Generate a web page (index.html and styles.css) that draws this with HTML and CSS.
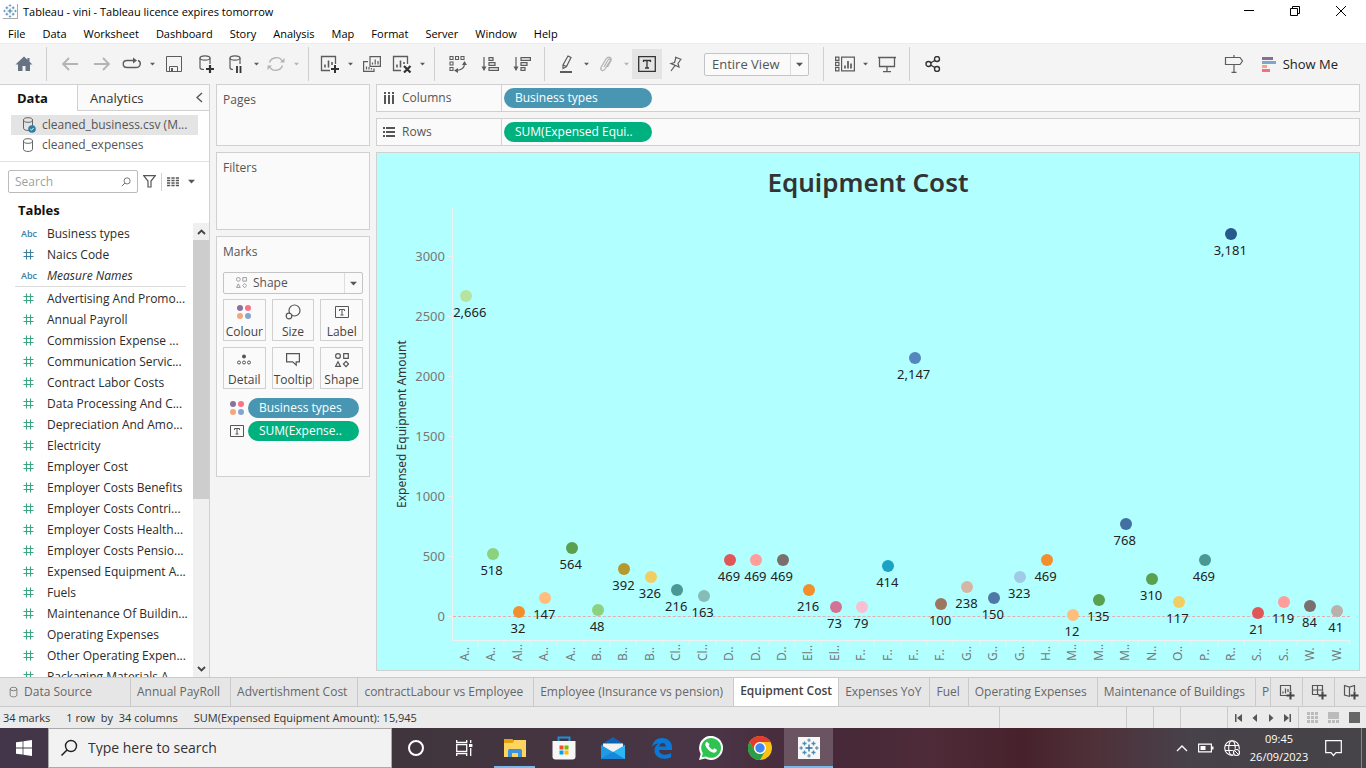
FILE: index.html
```html
<!DOCTYPE html>
<html lang="en-GB">
<head>
<meta charset="utf-8">
<title>Tableau - vini</title>
<link rel="stylesheet" href="styles.css">
</head>
<body>
<svg class="sprite" aria-hidden="true">
  <symbol id="tableau" viewBox="0 0 20 20"><g fill="none" stroke-width="1.3"><path stroke="#2a6f9e" d="M10 6.5v7M6.5 10h7"/><path stroke="#4c8bb5" d="M5.5 3.5v4M3.5 5.5h4M14.5 3.5v4M12.5 5.5h4M5.5 12.5v4M3.5 14.5h4M14.5 12.5v4M12.5 14.5h4"/><path stroke="#5f97bb" d="M10 .5v3.400M8.300 2.200h3.400M10 16.100v3.400M8.300 17.800h3.400M2.200 8.300v3.400M.5 10h3.400M17.800 8.300v3.400M16.100 10h3.400"/></g></symbol>
  <symbol id="caret" viewBox="0 0 8 5"><path fill="currentColor" d="M0 .5h8L4 4.800z"/></symbol>
  <symbol id="cyl" viewBox="0 0 12 14"><g fill="none" stroke="#666"><ellipse cx="6" cy="3" rx="4.500" ry="2.300"/><path d="M1.500 3v8.200c0 3 9 3 9 0V3"/></g></symbol>
  <symbol id="four" viewBox="0 0 14 14"><circle cx="3" cy="3" r="3" fill="#8a739b"/><circle cx="11" cy="3" r="3" fill="#fb7185"/><circle cx="3" cy="11" r="3" fill="#f3a77c"/><circle cx="11" cy="11" r="3" fill="#84a5cf"/></symbol>
  <symbol id="shapes" viewBox="0 0 14 14"><g fill="none" stroke="currentColor" stroke-width="1.200"><circle cx="3" cy="3" r="2.400"/><path d="M8.700.7h4.600v4.600H8.700zM3 8.800l2.400 4.500H.6zM11 8.300l2.600 2.700-2.600 2.700L8.400 11z"/></g></symbol>
  <symbol id="tbox" viewBox="0 0 14 14"><path fill="none" stroke="currentColor" d="M.5 1.500h13v11H.5z"/><path fill="none" stroke="currentColor" d="M4.500 6V4.500h5V6M7 4.500v5.500M5.500 10h3"/></symbol>
  <symbol id="hash" viewBox="0 0 11 11"><path fill="none" stroke="currentColor" stroke-width="1.100" d="M3.500.5v10M7.500.5v10M.5 3.500h10M.5 7.500h10"/></symbol>
  <symbol id="mag" viewBox="0 0 18 18"><circle cx="11" cy="7" r="5.500" fill="none" stroke="currentColor" stroke-width="1.400"/><path d="M7 11l-5.500 5.500" stroke="currentColor" stroke-width="1.600"/></symbol>
</svg>

<div class="app">
  <header class="titlebar">
    <svg class="logo" width="15" height="15"><use href="#tableau"/></svg>
    <h1>Tableau - vini - Tableau licence expires tomorrow</h1>
    <div class="winbtns">
      <button aria-label="Minimise"><svg width="12" height="12"><path d="M1 5.500h10" stroke="#000"/></svg></button>
      <button aria-label="Restore"><svg width="12" height="12"><path d="M1.500 3.500h7v7h-7zM3.500 3.500v-2h7v7h-2" fill="none" stroke="#000"/></svg></button>
      <button aria-label="Close"><svg width="12" height="12"><path d="M1 1l10 10M11 1L1 11" stroke="#000"/></svg></button>
    </div>
  </header>

  <nav class="menubar" aria-label="Main menu">
    <button>File</button><button>Data</button><button>Worksheet</button><button>Dashboard</button><button>Story</button><button>Analysis</button><button>Map</button><button>Format</button><button>Server</button><button>Window</button><button>Help</button>
  </nav>

  <div class="toolbar">
    <button class="tb" aria-label="Home"><svg width="18" height="16"><path fill="#667383" d="M9 .5L.5 8.500H3V15h4.500v-5h3v5H15V8.500h2.500L14.500 5.700V2h-2v1.800z"/></svg></button>
    <span class="sep"></span>
    <button class="tb dim" aria-label="Undo"><svg width="18" height="14"><path fill="none" stroke="currentColor" stroke-width="1.800" d="M8 1L2 7l6 6M2 7h15"/></svg></button>
    <button class="tb dim" aria-label="Redo"><svg width="18" height="14"><path fill="none" stroke="currentColor" stroke-width="1.800" d="M10 1l6 6-6 6M16 7H1"/></svg></button>
    <button class="tb split" aria-label="Replay"><svg width="20" height="14"><path fill="none" stroke="currentColor" stroke-width="1.400" d="M11 3.500H5c-5 0-5 7 0 7h9c5 0 5.500-6 2-7"/><path fill="currentColor" d="M11 .5l4 3-4 3z"/></svg></button>
    <button class="tb drop" aria-label="Replay options"><svg width="5" height="4"><use href="#caret"/></svg></button>
    <button class="tb" aria-label="Save"><svg width="16" height="16"><path fill="none" stroke="currentColor" d="M.5.5h15v15H.5zM3.500 15v-4.500h8V15"/><path fill="currentColor" d="M5 12h2v3H5z"/></svg></button>
    <button class="tb" aria-label="New data source"><svg width="16" height="18"><g fill="none" stroke="currentColor" stroke-width="1.200"><ellipse cx="7" cy="3" rx="5" ry="2.200"/><path d="M2 3v9.500c0 1.800 2 2 4 2M12 3v6"/></g><path stroke="#333" stroke-width="2.200" d="M12 10v8M8 14h8"/></svg></button>
    <button class="tb split" aria-label="Pause updates"><svg width="16" height="18"><g fill="none" stroke="currentColor" stroke-width="1.200"><ellipse cx="7" cy="3" rx="5" ry="2.200"/><path d="M2 3v9.500c0 1.800 1 2 3 2M12 3v6"/></g><path stroke="#333" stroke-width="1.800" d="M9 11v7M12.500 11v7"/></svg></button>
    <button class="tb drop" aria-label="Pause options"><svg width="5" height="4"><use href="#caret"/></svg></button>
    <button class="tb split dim" aria-label="Refresh"><svg width="18" height="16"><g fill="none" stroke="currentColor" stroke-width="1.400"><path d="M2.500 6.500c2-6 10.500-6.500 13-1M15.500 9.500c-2 6-10.500 6.500-13 1"/></g><path fill="currentColor" d="M13 6.500h4.500V2zM5 9.500H.5V14z"/></svg></button>
    <button class="tb drop dim" aria-label="Refresh options"><svg width="5" height="4"><use href="#caret"/></svg></button>
    <span class="sep"></span>
    <button class="tb split" aria-label="New worksheet"><svg width="20" height="18"><path fill="none" stroke="currentColor" stroke-width="1.300" d="M10 15.500H1.500v-14h14V9"/><path stroke="currentColor" stroke-width="1.600" d="M5 12.500v-3M8.500 12.500v-7M12 10V7"/><path stroke="#333" stroke-width="2" d="M15 10v8M11 14h8"/></svg></button>
    <button class="tb drop" aria-label="New worksheet options"><svg width="5" height="4"><use href="#caret"/></svg></button>
    <button class="tb" aria-label="Duplicate"><svg width="18" height="16"><path fill="none" stroke="currentColor" stroke-width="1.200" d="M7 .6h10.400v9.800H7zM5 5.600H.6v9.800h10.400V12.500"/><path stroke="currentColor" stroke-width="1.200" d="M9.500 8.500v-2M12.200 8.500v-5M15 8.500V5M3.500 13.500v-3M6 13.500V11M8.500 13.500V12"/></svg></button>
    <button class="tb split" aria-label="Clear sheet"><svg width="20" height="18"><path fill="none" stroke="currentColor" stroke-width="1.300" d="M9 15.500H1.500v-14h14V9"/><path stroke="currentColor" stroke-width="1.600" d="M5 12.500v-3M8.500 12.500v-7M12 9V7"/><path stroke="#333" stroke-width="2.200" d="M12 11l6.500 6.500M18.500 11L12 17.500"/></svg></button>
    <button class="tb drop" aria-label="Clear options"><svg width="5" height="4"><use href="#caret"/></svg></button>
    <span class="sep"></span>
    <button class="tb" aria-label="Swap rows and columns"><svg width="18" height="18"><g fill="none" stroke="currentColor" stroke-width="1.100"><path d="M1 1.500h3v3H1zM6.500 1.500h3v3h-3zM12 1.500h3v3h-3zM1 7h3v3H1zM1 12.500h3v3H1zM15.500 9c0 4-3 6-8 6.500"/></g><path fill="currentColor" d="M13 10l2.500-4L18 10zM9 13v5l-4-2.500z"/></svg></button>
    <button class="tb" aria-label="Sort ascending"><svg width="18" height="16"><path fill="none" stroke="currentColor" stroke-width="1.200" d="M3 1v13M8 1.600h4v2.800H8zM8 6.600h6v2.800H8zM8 11.600h9.400v2.800H8z"/><path fill="currentColor" d="M.5 10.500h5L3 15z"/></svg></button>
    <button class="tb" aria-label="Sort descending"><svg width="18" height="16"><path fill="none" stroke="currentColor" stroke-width="1.200" d="M3 1v13M8 1.600h9.400v2.800H8zM8 6.600h6v2.800H8zM8 11.600h4v2.800H8z"/><path fill="currentColor" d="M.5 10.500h5L3 15z"/></svg></button>
    <span class="sep"></span>
    <button class="tb split" aria-label="Highlight"><svg width="14" height="18"><path fill="none" stroke="currentColor" stroke-width="1.200" d="M9 1l3 1.500-4.500 9-3.500 2V10zM4 10l3.500 1.500"/><path stroke="currentColor" stroke-width="2" d="M1 17h12"/></svg></button>
    <button class="tb drop" aria-label="Highlight options"><svg width="5" height="4"><use href="#caret"/></svg></button>
    <button class="tb split dim" aria-label="Group"><svg width="14" height="16"><path fill="none" stroke="currentColor" stroke-width="1.300" d="M5 11l4-7c1-2 3-1 2 1l-5 8c-2 3-5 1-4-1.500L7 3c2-3 6-2 5 1.500L8.500 11"/></svg></button>
    <button class="tb drop dim" aria-label="Group options"><svg width="5" height="4"><use href="#caret"/></svg></button>
    <button class="tb pressed" aria-label="Show mark labels" aria-pressed="true"><svg width="18" height="16"><path fill="none" stroke="#333" stroke-width="1.300" d="M.7.7h16.600v14.600H.7zM5.500 6V4.500h7V6M9 4.500v7.500M7 12h4"/></svg></button>
    <button class="tb split" aria-label="Fix axes"><svg width="14" height="16"><path fill="none" stroke="currentColor" stroke-width="1.200" d="M6 1l6.500 2.500M7 1.500L5.500 6.500 2 7.500l8 3.500-1-3.500 3-4.500M6 9.500L2 15"/></svg></button>
    <div class="combo fit">
      <select aria-label="Fit"><option>Entire View</option></select>
      <span class="combo-arrow"><svg width="7" height="5"><use href="#caret"/></svg></span>
    </div>
    <span class="sep"></span>
    <button class="tb split" aria-label="Show cards"><svg width="20" height="16"><path fill="none" stroke="currentColor" stroke-width="1.200" d="M.6 1.100h3.300v3.300H.6zM.6 6.300h3.300v3.300H.6zM.6 11.500h3.300v3.300H.6zM6.600 1.100h12.800v13.700H6.600z"/><path stroke="currentColor" stroke-width="1.700" d="M10 12.500v-3M13 12.500V5M16 12.500v-5"/></svg></button>
    <button class="tb drop" aria-label="Card options"><svg width="5" height="4"><use href="#caret"/></svg></button>
    <button class="tb" aria-label="Presentation mode"><svg width="18" height="17"><path fill="none" stroke="currentColor" stroke-width="1.300" d="M0 1.500h18M1.500 2v8.500h15V2M9 10.500v5M5 15.700h8"/></svg></button>
    <span class="sep"></span>
    <button class="tb" aria-label="Share"><svg width="16" height="16"><g fill="none" stroke="#333" stroke-width="1.400"><circle cx="3.500" cy="8" r="2.500"/><circle cx="12" cy="3" r="2.500"/><circle cx="12" cy="13" r="2.500"/><path d="M5.500 7l4.300-2.500M5.500 9l4.300 2.500"/></g></svg></button>
    <span class="push"></span>
    <button class="tb" aria-label="Guide"><svg width="20" height="18"><path fill="none" stroke="currentColor" stroke-width="1.200" d="M10 0v2M1.500 2.500h14.500l2.500 3.500-2.500 3.500H1.500zM10 9.500v8M7.500 17.300h5"/></svg></button>
    <button class="showme"><svg width="15" height="15"><path fill="#866f96" d="M0 0h11v3H0z"/><path fill="#82a5ce" d="M0 4h14v3H0z"/><path fill="#f3a581" d="M0 8h5v3H0z"/><path fill="#fb6c81" d="M0 12h8v3H0z"/></svg>Show Me</button>
  </div>

  <main class="work">
    <aside class="side">
      <div class="side-tabs" role="tablist">
        <button class="stab on" role="tab" aria-selected="true">Data</button>
        <button class="stab off" role="tab" aria-selected="false">Analytics</button>
        <button class="fold" aria-label="Collapse pane"><svg width="7" height="11"><path d="M6 1L1 5.500 6 10" fill="none" stroke="#555" stroke-width="1.400"/></svg></button>
      </div>
      <ul class="sources">
        <li class="sel"><svg width="14" height="16"><use href="#cyl" width="12" height="14"/><circle cx="10" cy="12" r="3.800" fill="#2e7d9e"/><path d="M8.300 12l1.200 1.200 2.200-2.300" fill="none" stroke="#fff"/></svg><span>cleaned_business.csv (M...</span></li>
        <li><svg width="14" height="14"><use href="#cyl" width="12" height="14"/></svg><span>cleaned_expenses</span></li>
      </ul>
      <div class="find">
        <label class="findbox"><input type="text" placeholder="Search" aria-label="Search fields"><svg width="10" height="10"><use href="#mag"/></svg></label>
        <button aria-label="Filter fields"><svg width="13" height="13"><path d="M.7.7h11.600L8 6v6H5V6z" fill="none" stroke="#555" stroke-width="1.200"/></svg></button>
        <span class="bar"></span>
        <button aria-label="View as list"><svg width="12" height="10"><path d="M0 1h12M0 3.500h12M0 6h12M0 8.500h12" stroke="#555" stroke-width="1.300" stroke-dasharray="3.200 1.200"/></svg></button>
        <button aria-label="List options"><svg width="7" height="5"><use href="#caret"/></svg></button>
      </div>
      <h2>Tables</h2>
      <div class="fields">
        <div class="field-scroll">
          <ul class="dims">
            <li><b>Abc</b><span>Business types</span></li>
            <li><svg><use href="#hash"/></svg><span>Naics Code</span></li>
            <li><b>Abc</b><em>Measure Names</em></li>
          </ul>
          <ul class="meas">
            <li><svg><use href="#hash"/></svg><span>Advertising And Promo...</span></li>
            <li><svg><use href="#hash"/></svg><span>Annual Payroll</span></li>
            <li><svg><use href="#hash"/></svg><span>Commission Expense ...</span></li>
            <li><svg><use href="#hash"/></svg><span>Communication Servic...</span></li>
            <li><svg><use href="#hash"/></svg><span>Contract Labor Costs</span></li>
            <li><svg><use href="#hash"/></svg><span>Data Processing And C...</span></li>
            <li><svg><use href="#hash"/></svg><span>Depreciation And Amo...</span></li>
            <li><svg><use href="#hash"/></svg><span>Electricity</span></li>
            <li><svg><use href="#hash"/></svg><span>Employer Cost</span></li>
            <li><svg><use href="#hash"/></svg><span>Employer Costs Benefits</span></li>
            <li><svg><use href="#hash"/></svg><span>Employer Costs Contri...</span></li>
            <li><svg><use href="#hash"/></svg><span>Employer Costs Health...</span></li>
            <li><svg><use href="#hash"/></svg><span>Employer Costs Pensio...</span></li>
            <li><svg><use href="#hash"/></svg><span>Expensed Equipment A...</span></li>
            <li><svg><use href="#hash"/></svg><span>Fuels</span></li>
            <li><svg><use href="#hash"/></svg><span>Maintenance Of Buildin...</span></li>
            <li><svg><use href="#hash"/></svg><span>Operating Expenses</span></li>
            <li><svg><use href="#hash"/></svg><span>Other Operating Expen...</span></li>
            <li><svg><use href="#hash"/></svg><span>Packaging Materials A...</span></li>
          </ul>
        </div>
        <div class="scrollbar">
          <button aria-label="Scroll up"><svg width="9" height="6"><path d="M1 5l3.500-3.500L8 5" fill="none" stroke="#444" stroke-width="1.800"/></svg></button>
          <span class="thumb"></span>
          <button aria-label="Scroll down"><svg width="9" height="6"><path d="M1 1l3.500 3.500L8 1" fill="none" stroke="#444" stroke-width="1.800"/></svg></button>
        </div>
      </div>
    </aside>

    <section class="cards">
      <div class="card pages"><h3>Pages</h3></div>
      <div class="card filters"><h3>Filters</h3></div>
      <div class="card marks">
        <h3>Marks</h3>
        <div class="combo mark-type">
          <svg class="combo-icon" width="11" height="11"><use href="#shapes"/></svg>
          <select aria-label="Mark type"><option>Shape</option></select>
          <span class="combo-arrow"><svg width="7" height="5"><use href="#caret"/></svg></span>
        </div>
        <div class="encodings">
          <button><svg width="14" height="14"><use href="#four"/></svg>Colour</button>
          <button><svg width="16" height="16"><g fill="#fafafa" stroke="#555" stroke-width="1.200"><circle cx="9.500" cy="6.500" r="5.500"/><circle cx="4" cy="12" r="2.800"/></g></svg>Size</button>
          <button><svg width="14" height="14"><use href="#tbox"/></svg>Label</button>
          <button><svg width="14" height="14"><circle cx="7" cy="4.500" r="2" fill="#555"/><g fill="none" stroke="#555"><circle cx="2" cy="10.500" r="1.500"/><circle cx="7" cy="10.500" r="1.500"/><circle cx="12" cy="10.500" r="1.500"/></g></svg>Detail</button>
          <button><svg width="14" height="14"><path d="M.6 1.600h12.800v8.300h-3.200v3.300L6.700 9.900H.6z" fill="none" stroke="#555" stroke-width="1.200"/></svg>Tooltip</button>
          <button><svg width="14" height="14"><use href="#shapes"/></svg>Shape</button>
        </div>
        <div class="enc-row"><svg width="14" height="14"><use href="#four"/></svg><button class="pill blue">Business types</button></div>
        <div class="enc-row"><svg width="14" height="14"><use href="#tbox"/></svg><button class="pill green">SUM(Expense..</button></div>
      </div>
    </section>

    <section class="canvas">
      <div class="shelf">
        <div class="shelf-name"><svg width="12" height="12"><path d="M2 0v2M6 0v2M10 0v2M2 3v9M6 3v9M10 3v9" stroke="#555" stroke-width="2"/></svg>Columns</div>
        <button class="pill blue">Business types</button>
      </div>
      <div class="shelf">
        <div class="shelf-name"><svg width="12" height="12"><path d="M0 2h2M0 6h2M0 10h2M3 2h9M3 6h9M3 10h9" stroke="#555" stroke-width="2"/></svg>Rows</div>
        <button class="pill green">SUM(Expensed Equi..</button>
      </div>
      <div class="viz">
        <h2>Equipment Cost</h2>
        <div class="chart">
          <div class="y-title">Expensed Equipment Amount</div>
          <div class="y-axis" id="yAxis"></div>
          <div class="plot" id="plot"></div>
          <div class="x-axis" id="xAxis"></div>
        </div>
      </div>
    </section>
  </main>

  <nav class="sheets" aria-label="Sheets">
    <div class="sheet-list">
      <button class="sheet source"><svg width="9" height="12"><use href="#cyl"/></svg>Data Source</button>
      <button class="sheet">Annual PayRoll</button>
      <button class="sheet">Advertishment Cost</button>
      <button class="sheet">contractLabour vs Employee</button>
      <button class="sheet">Employee (Insurance vs pension)</button>
      <button class="sheet current" aria-current="page">Equipment Cost</button>
      <button class="sheet short">Expenses YoY</button>
      <button class="sheet short">Fuel</button>
      <button class="sheet">Operating Expenses</button>
      <button class="sheet">Maintenance of Buildings</button>
      <button class="sheet last">P</button>
    </div>
    <button class="add" aria-label="New worksheet"><svg width="16" height="16"><path fill="none" stroke="#555" stroke-width="1.200" d="M8 11.500H1.500v-10h10V7"/><path stroke="#555" stroke-width="1.200" d="M4 9.500v-2M6.500 9.500v-5M9 8V5"/><path stroke="#444" stroke-width="2" d="M11.500 7.500v8M7.500 11.500h8"/></svg></button>
    <button class="add" aria-label="New dashboard"><svg width="16" height="16"><path fill="none" stroke="#555" stroke-width="1.200" d="M8 10.500H1.500v-9h10V7M6.500 1.500v9M1.500 6h10"/><path stroke="#444" stroke-width="2" d="M11.500 7.500v8M7.500 11.500h8"/></svg></button>
    <button class="add" aria-label="New story"><svg width="16" height="16"><path fill="none" stroke="#555" stroke-width="1.200" d="M7 12.500l-5.500-1.500V1.500L6.500 3l5-1.500V7M6.500 3v9"/><path stroke="#444" stroke-width="2" d="M11.500 7.500v8M7.500 11.500h8"/></svg></button>
  </nav>

  <footer class="status">
    <span>34 marks</span><span>1 row &nbsp;by&nbsp; 34 columns</span><span>SUM(Expensed Equipment Amount): 15,945</span>
    <i class="cell wide"></i><i class="cell slim"></i><i class="cell slim"></i><i class="cell mid"></i>
    <div class="cell pager">
      <button aria-label="First"><svg width="8" height="8"><path fill="#555" d="M0 0h1.500v8H0zM7 0v8L2 4z"/></svg></button>
      <button aria-label="Previous"><svg width="8" height="8"><path fill="#555" d="M6 0v8L1.500 4z"/></svg></button>
      <button aria-label="Next"><svg width="8" height="8"><path fill="#555" d="M2 0v8l4.500-4z"/></svg></button>
      <button aria-label="Last"><svg width="8" height="8"><path fill="#555" d="M6.500 0H8v8H6.500zM1 0v8l5-4z"/></svg></button>
    </div>
    <div class="cell pager views">
      <button aria-label="Show sheet sorter"><svg width="11" height="11"><path stroke="#bbb" stroke-width="3" stroke-dasharray="3 1" d="M0 1.500h11M0 5.500h11M0 9.500h11"/></svg></button>
      <button aria-label="Show filmstrip"><svg width="11" height="11"><path fill="#bbb" d="M0 0h11v7H0z"/><path stroke="#bbb" stroke-width="3" stroke-dasharray="3 1" d="M0 9.500h11"/></svg></button>
      <button aria-label="Show tabs"><svg width="11" height="11"><path fill="#666" d="M0 0h11v11H0z"/></svg></button>
    </div>
  </footer>

  <div class="taskbar">
    <button class="start" aria-label="Start"><svg width="16" height="16"><path fill="#fff" d="M0 2.300L6.600 1.400v6.200H0zM7.400 1.300L16 0v7.600H7.400zM0 8.400h6.600v6.200L0 13.700zM7.400 8.400H16V16l-8.600-1.200z"/></svg></button>
    <label class="tasksearch"><svg width="18" height="18"><use href="#mag"/></svg><input type="text" placeholder="Type here to search" aria-label="Type here to search"></label>
    <button class="sys" aria-label="Cortana"><svg width="18" height="18"><circle cx="9" cy="9" r="7" fill="none" stroke="#fff" stroke-width="2"/></svg></button>
    <button class="sys" aria-label="Task view"><svg width="17" height="16"><path fill="none" stroke="#fff" stroke-width="1.300" d="M.7 0v2.500h10V0M.7 4.700h10v6.600H.7zM.7 16v-2.500h10V16M14.700 0v3M14.700 8v8"/><path fill="#fff" d="M13 4h3.400v3H13z"/></svg></button>
    <button class="taskapp open" aria-label="File Explorer"><svg width="22" height="18"><path fill="#fcd462" d="M0 2.500h8L10 1h12v17H0z"/><path fill="#e5a50a" d="M0 0h8.500L10 2 8.500 4H0z"/><path fill="#3b93dc" d="M4 18v-6c0-1 .5-2 1.500-2h11c1 0 1.500 1 1.500 2v6h-4v-4H8v4z"/></svg></button>
    <button class="taskapp" aria-label="Microsoft Store"><svg width="24" height="24"><path fill="none" stroke="#1e90d8" stroke-width="2" d="M6.500 6V1.500h11V6"/><path fill="#f6f6f6" d="M.5 5h23v15.500c0 2-1 3-3 3h-17c-2 0-3-1-3-3z"/><path fill="#f25022" d="M7.500 9.500h4v4h-4z"/><path fill="#7fba00" d="M12.500 9.500h4v4h-4z"/><path fill="#00a4ef" d="M7.500 14.500h4v4h-4z"/><path fill="#ffb900" d="M12.500 14.500h4v4h-4z"/></svg></button>
    <button class="taskapp" aria-label="Mail"><svg width="24" height="22"><path fill="#1063b0" d="M0 8L12 0l12 8v4H0z"/><path fill="#f2f2f2" d="M2 6.500h20V12l-10 5L2 12z"/><path fill="#1d9be6" d="M0 8l12 7-12 7z"/><path fill="#2bb7f5" d="M24 8L0 22h24z"/><path fill="#1687d9" d="M0 22l12-7.200L24 22z"/></svg></button>
    <button class="taskapp" aria-label="Edge"><svg width="22" height="22"><path fill="#0a78d6" d="M1 10C2 4 6 1 11 1c6 0 10 4 10 9v3H8c0 5 7 6 12 3v4.200C12 24 3.500 20.500 3.500 13.500 3.500 10 5.500 7.500 8 6.500 4.500 6.500 2.500 8 1 10zm7.200-.5h6.600C14.800 4.500 8.700 5 8.200 9.500z"/></svg></button>
    <button class="taskapp" aria-label="WhatsApp"><svg width="24" height="24"><path fill="#fff" d="M0 24l1.700-6A12 12 0 1 1 6.200 22.400z"/><path fill="#2fc351" d="M2.800 21.200l1-3.900A9.900 9.900 0 1 1 7 20.400z"/><path fill="#fff" d="M8.700 6.500c-.4-.8-1-.8-1.500-.3-1.300 1.300-1.200 3 .1 5 2 3 4.200 4.900 7.300 5.500 1.600.2 3.400-.9 3.300-2.900-.8-.7-1.700-1.100-2.600-1.500l-1.300 1.500c-2-.8-3.400-2-4.400-4 .6-.7 1.100-1.200.7-2z"/></svg></button>
    <button class="taskapp" aria-label="Chrome"><svg width="24" height="24"><circle cx="12" cy="12" r="12" fill="#fbc116"/><path fill="#e33b2e" d="M1.600 6A12 12 0 0 1 22.400 6H12a6 6 0 0 0-5.200 9z"/><path fill="#2a9d4a" d="M1.600 6A12 12 0 0 0 12 24l5.200-9a6 6 0 0 1-10.400 0z"/><circle cx="12" cy="12" r="6" fill="#fff"/><circle cx="12" cy="12" r="4.700" fill="#4285f4"/></svg></button>
    <button class="taskapp open active" aria-label="Tableau"><svg width="22" height="22"><path fill="#f7f7f7" d="M0 0h22v22H0z"/><use href="#tableau" x="1" y="1" width="20" height="20"/></svg></button>
    <span class="push"></span>
    <div class="tray">
      <svg width="12" height="8"><path d="M1 7l5-5 5 5" fill="none" stroke="#fff" stroke-width="1.400"/></svg>
      <svg width="16" height="10"><path d="M.6 1.100h12.800v7.800H.6z" fill="none" stroke="#fff" stroke-width="1.200"/><path fill="#fff" d="M2.500 3h5v4h-5zM14 3.500h1.500v3H14z"/></svg>
      <svg width="17" height="17"><g fill="none" stroke="#fff" stroke-width="1.100"><circle cx="8" cy="8" r="7.300"/><ellipse cx="8" cy="8" rx="3.300" ry="7.300"/><path d="M1 5.500h14M1 10.500h9"/></g><circle cx="12.500" cy="12.500" r="4" fill="#47414a"/><circle cx="12.500" cy="12.500" r="3" fill="none" stroke="#fff" stroke-width="1.200"/><path d="M10.500 10.500l4 4" stroke="#fff"/></svg>
    </div>
    <div class="clock"><time>09:45</time><time>26/09/2023</time></div>
    <button class="notif" aria-label="Notifications"><svg width="17" height="17"><path d="M.7.7h15.600v12H11L8.500 15.500 6 12.700H.7z" fill="none" stroke="#fff" stroke-width="1.200"/></svg></button>
    <button class="peek" aria-label="Show desktop"></button>
  </div>
</div>
<script src="chart.js"></script>
</body>
</html>
```

FILE: styles.css
```css
* { box-sizing: border-box; }
body { margin: 0; font: 12px/16px "Open Sans", "Liberation Sans", sans-serif; color: #333; background: #f4f4f4; }
button, select, input { font: inherit; color: inherit; background: none; border: 0; padding: 0; margin: 0; border-radius: 0; }
button { display: flex; align-items: center; justify-content: center; white-space: nowrap; }
h1, h2, h3, ul { margin: 0; padding: 0; font-weight: 400; list-style: none; }
svg { flex: none; display: block; }
select { appearance: none; width: 100%; height: 100%; }
.sprite { position: absolute; width: 0; height: 0; }
.app { display: flex; flex-direction: column; height: 100vh; overflow: hidden; }
.push { flex: 1; }

/* Window chrome */
.titlebar { display: flex; align-items: center; gap: 5px; height: 23px; padding: 0 2px 0 3px; background: #fff; color: #000; }
.titlebar h1 { font-size: 11px; flex: 1; }
.logo { border-right: 1px solid #aaa; border-bottom: 1px solid #aaa; }
.winbtns { display: flex; padding-bottom: 2px; }
.winbtns button { width: 46px; height: 20px; }
.menubar { display: flex; gap: 17px; height: 20px; padding: 1px 8px 0; background: #fff; color: #000; font-size: 11px; }

/* Toolbar */
.toolbar { display: flex; align-items: center; height: 41px; padding: 0 22px 0 8px; border-top: 1px solid #ececec; color: #5c5c5c; }
.tb { width: 32px; height: 30px; }
.tb.split { width: 28px; }
.tb.drop { width: 12px; }
.tb.dim { color: #b4b4b4; }
.tb.pressed { width: 30px; background: #e4e4e4; }
.sep { width: 1px; height: 34px; margin: 0 7px 0 6px; background: #d0d0d0; }
.combo { position: relative; border: 1px solid #c4c4c4; border-radius: 2px; background: #fafafa; color: #555; }
.combo-arrow { position: absolute; top: 0; right: 0; bottom: 0; width: 18px; display: flex; align-items: center; justify-content: center; border-left: 1px solid #ddd; pointer-events: none; }
.fit { width: 105px; height: 23px; margin: 0 8px 0 14px; font-size: 13px; }
.fit select { padding-left: 7px; }
.showme { gap: 6px; margin: 0 6px 0 12px; font-size: 13px; color: #222; }

/* Work area */
.work { flex: 1; min-height: 0; display: flex; gap: 6px; padding-right: 6px; }
.side { width: 210px; display: flex; flex-direction: column; border: solid #d0d0d0; border-width: 1px 1px 0 0; background: #fff; }
.side-tabs { display: flex; height: 26px; font-size: 13px; }
.stab.on { width: 77px; padding-right: 12px; font-weight: 700; color: #111; }
.stab.off { flex: 1; justify-content: flex-start; padding-left: 12px; border: solid #d0d0d0; border-width: 0 0 1px 1px; background: #fafafa; }
.fold { width: 20px; border-bottom: 1px solid #d0d0d0; background: #fafafa; }
.sources { padding: 4px 11px 6px; border-bottom: 1px solid #e0e0e0; color: #555; }
.sources li { display: flex; align-items: center; gap: 6px; height: 20px; padding-left: 11px; white-space: nowrap; }
.sources .sel { background: #e4e4e4; }
.find { display: flex; align-items: center; height: 39px; padding-left: 8px; gap: 5px; color: #555; }
.findbox { display: flex; align-items: center; width: 130px; height: 23px; padding: 0 6px; border: 1px solid #bbb; border-radius: 2px; }
.findbox input { flex: 1; min-width: 0; outline: 0; }
.findbox input::placeholder { color: #a0a0a0; }
.find .bar { width: 1px; height: 18px; background: #d0d0d0; }
.find button:last-child { margin-left: 4px; }
.side h2 { margin-bottom: 4px; padding: 0 18px; font-size: 13px; line-height: 18px; font-weight: 700; color: #111; }
.fields { flex: 1; min-height: 0; display: flex; }
.field-scroll { flex: 1; overflow: hidden; white-space: nowrap; }
.fields li { display: flex; align-items: center; height: 21px; color: #2b2b2b; }
.fields li > :first-child { flex: none; width: 16px; margin: 0 10px 0 21px; color: #3a7f9e; font-size: 9px; font-weight: 600; }
.fields li > svg:first-child { width: 11px; height: 11px; margin: 0 13px 0 23px; }
.fields .meas li > svg:first-child { color: #3da582; }
.dims { padding-bottom: 1px; }
.dims::after { content: ""; display: block; height: 1px; margin: 0 7px 0 15px; background: #ddd; }
.scrollbar { width: 16px; display: flex; flex-direction: column; background: #f0f0f0; }
.scrollbar button { height: 17px; }
.thumb { flex: 0 0 259px; background: #cdcdcd; }
.scrollbar button:last-child { margin-top: auto; }

/* Cards */
.cards { width: 154px; display: flex; flex-direction: column; gap: 6px; }
.card { padding: 7px 6px; border: 1px solid #d0d0d0; background: #fafafa; color: #444; }
.card h3, .shelf-name { font-size: 12px; line-height: 16px; color: #555; }
.pages { height: 62px; }
.filters { height: 78px; }
.marks { height: 241px; }
.mark-type { height: 22px; margin: 12px 0 5px; }
.mark-type select { padding-left: 29px; }
.mark-type .combo-icon { position: absolute; left: 12px; top: 4px; color: #999; }
.encodings { display: grid; grid-template-columns: repeat(3, 1fr); gap: 6px; margin-bottom: 9px; }
.encodings button { flex-direction: column; gap: 4px; min-width: 0; height: 42px; padding-top: 4px; border: 1px solid #d0d0d0; color: #444; }
.encodings svg, .enc-row svg { color: #555; }
.encodings svg { height: 16px; }
.enc-row { display: flex; align-items: center; gap: 4px; margin: 0 4px 3px 7px; }
.pill { justify-content: flex-start; height: 20px; padding: 0 11px; border-radius: 10px; color: #fff; font-weight: 500; }
.enc-row .pill { flex: 1; }
.blue { background: #4996b2; }
.green { background: #00b180; }

/* Shelves and view */
.canvas { flex: 1; min-width: 0; display: flex; flex-direction: column; gap: 6px; padding-bottom: 6px; }
.shelf { display: flex; align-items: center; height: 28px; border: 1px solid #d0d0d0; background: #fafafa; }
.shelf-name { display: flex; align-items: center; gap: 7px; width: 125px; height: 100%; padding-left: 6px; border-right: 1px solid #d0d0d0; }
.shelf .pill { width: 148px; margin-left: 2px; }
.viz { flex: 1; min-height: 0; display: flex; flex-direction: column; border: 1px solid #d0d0d0; background: #b2ffff; font-family: "Noto Sans", sans-serif; }
.viz h2 { height: 55px; padding-top: 13px; text-align: center; font-size: 26px; line-height: 32px; font-weight: 600; color: #333; }
.chart { flex: 1; display: grid; grid-template: 1fr 29px / 33px 42px 1fr; padding-right: 9px; }
.y-title { display: flex; justify-content: center; align-items: center; margin-left: 16px; writing-mode: vertical-rl; transform: rotate(180deg); font-size: 12px; color: #333; }
.y-axis { position: relative; border-bottom: 1px solid transparent; color: #787878; font-size: 13px; }
.y-axis span { position: absolute; right: 7px; transform: translateY(50%); line-height: 18px; }
.y-axis span::after { content: ""; position: absolute; right: -7px; top: 9px; width: 5px; height: 1px; background: #f0f0f0; }
.plot { position: relative; border: solid #f0f0f0; border-width: 0 0 1px 1px; font-size: 13px; color: #222; }
.zero { position: absolute; left: 0; right: 0; margin-bottom: -1px; border-top: 1px dashed #e2aeb0; }
.mark { position: absolute; width: 12px; height: 12px; border-radius: 50%; transform: translate(-50%, 50%); }
.mark span { position: absolute; top: 13px; left: 5px; line-height: 18px; transform: translateX(-50%); }
.mark.edge span { left: -7px; transform: none; }
.x-axis { grid-column: 3; display: grid; grid-auto-flow: column; grid-auto-columns: 1fr; color: #787878; font-size: 12px; }
.x-axis span { position: relative; display: flex; align-items: center; height: 20px; writing-mode: vertical-rl; transform: rotate(180deg); line-height: 26px; }
.x-axis span::before { content: ""; position: absolute; left: 0; bottom: 0; width: 1px; height: 4px; background: #f0f0f0; }

/* Sheet tabs */
.sheets { display: flex; height: 30px; border: solid #cacaca; border-width: 1px 0; background: #e6e6e6; color: #666; }
.sheet-list { flex: 1; min-width: 0; display: flex; overflow: hidden; }
.sheet { flex: none; padding: 0 10px 0 6px; border-right: 1px solid #cacaca; }
.source { width: 131px; justify-content: flex-start; gap: 6px; padding-left: 9px; }
.short { padding-right: 8px; }
.current { padding: 0 6px 2px; background: #fff; font-weight: 600; color: #444; }
.last { border: 0; padding-right: 0; }
.add { width: 32px; border-left: 1px solid #cacaca; }

/* Status bar */
.status { display: flex; align-items: center; height: 21px; padding-left: 3px; background: #ebebeb; font-size: 11px; }
.status > span { margin-right: 16px; white-space: nowrap; }
.cell { align-self: stretch; border-left: 1px solid #cacaca; }
.wide { width: 127px; margin-left: auto; }
.slim { width: 27px; }
.mid { width: 47px; }
.pager { display: flex; align-items: center; justify-content: space-between; width: 71px; padding: 0 7px; }
.views { width: 68px; padding: 0 6px 0 8px; }

/* Taskbar */
.taskbar { display: flex; height: 40px; color: #fff; background: linear-gradient(90deg, #44364a 0%, #40353d 30%, #4a3546 52%, #452838 60%, #4e2b38 68%, #47222d 75%, #4f3038 80%, #47414a 87%, #454447 100%); }
.start { width: 48px; }
.tasksearch { display: flex; align-items: center; gap: 10px; width: 344px; padding-left: 11px; border: 1px solid #aaa; background: #f2f2f2; color: #222; font-size: 14px; }
.tasksearch input { flex: 1; outline: 0; }
.tasksearch input::placeholder { color: #333; opacity: 1; }
.sys { width: 48px; }
.taskapp { width: 49px; border-bottom: 2px solid transparent; padding-top: 2px; }
.sys + .taskapp { margin-left: 2px; }
.open { border-image: linear-gradient(90deg, transparent 10%, #76b9ed 10%, #76b9ed 90%, transparent 90%) 1; border-style: solid; border-width: 0 0 2px; }
.active { background: #6b5461; border-image: none; border-color: #76b9ed; }
.tray { display: flex; align-items: center; gap: 10px; }
.clock { display: flex; flex-direction: column; justify-content: center; align-items: center; width: 76px; font-size: 11px; line-height: 18px; }
.notif { width: 32px; margin-right: 12px; }
.peek { width: 5px; border-left: 1px solid #8a8589; }
```

FILE: chart.js
```js
// [category label, value, mark colour]
const data = [
  ['A..', 2666, '#b6e3a0'], ['A..', 518, '#8cd17d'], ['Al..', 32, '#f28e2b'], ['A..', 147, '#ffbe7d'], ['A..', 564, '#59a14f'],
  ['B..', 48, '#8cd17d'], ['B..', 392, '#b6992d'], ['B..', 326, '#f1ce63'], ['Cl..', 216, '#499894'], ['Cl..', 163, '#86bcb6'],
  ['D..', 469, '#e15759'], ['D..', 469, '#ff9d9a'], ['D..', 469, '#79706e'], ['El..', 216, '#f28e2b'], ['El..', 73, '#d37295'],
  ['F..', 79, '#fabfd2'], ['F..', 414, '#1ba3c6'], ['F..', 2147, '#5387bd'], ['F..', 100, '#9d7660'], ['G..', 238, '#d7b5a6'],
  ['G..', 150, '#4e79a7'], ['G..', 323, '#a0cbe8'], ['H..', 469, '#f28e2b'], ['M..', 12, '#ffbe7d'], ['M..', 135, '#59a14f'],
  ['M..', 768, '#4270a0'], ['N..', 310, '#59a14f'], ['O..', 117, '#f1ce63'], ['P..', 469, '#499894'], ['R..', 3181, '#26598c'],
  ['S..', 21, '#e15759'], ['S..', 119, '#ff9d9a'], ['W.', 84, '#79706e'], ['W.', 41, '#bab0ac']
];
const low = -200;
const high = 3400;
const pct = v => (v - low) / (high - low) * 100 + '%';
const add = (parent, cls, text) => {
  const el = document.createElement('span');
  el.className = cls;
  if (text) el.textContent = text;
  parent.appendChild(el);
  return el;
};
const plot = document.getElementById('plot');
const yAxis = document.getElementById('yAxis');
const xAxis = document.getElementById('xAxis');
for (let v = 0; v <= 3000; v += 500) add(yAxis, 'tick', String(v)).style.bottom = pct(v);
add(plot, 'zero').style.bottom = pct(0);
data.forEach(([name, value, colour], i) => {
  const mark = add(plot, i === 0 ? 'mark edge' : 'mark');
  mark.style.left = (i + 0.5) / data.length * 100 + '%';
  mark.style.bottom = pct(value);
  mark.style.background = colour;
  add(mark, '', value.toLocaleString('en-GB'));
  add(xAxis, 'cat', name);
});
```
